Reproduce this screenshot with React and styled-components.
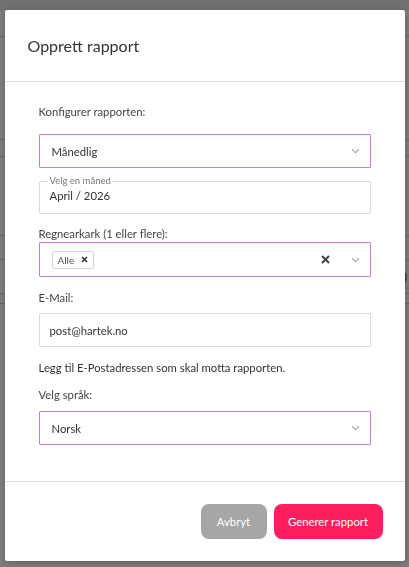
import React from 'react';
import styled, { createGlobalStyle } from 'styled-components';

const GlobalStyle = createGlobalStyle`
    html, body {
        margin: 0;
        padding: 0;
        background: #ffffff;
        font-family: 'Lato', 'Noto Sans', sans-serif;
    }
    * {
        box-sizing: border-box;
    }
`;

// Page behind the dialog
const Page = styled.div`
    width: 409px;
    height: 567px;
    overflow: hidden;
    background: #fff;
`;

const PageTop = styled.div`
    height: 10px;
    background: #e2e2e2;
`;

const PageRow = styled.div`
    height: ${props => props.h}px;
    border-bottom: 1px solid #d6d6d6;
    display: flex;
    align-items: center;
    justify-content: flex-end;
    padding-right: 2px;
    font-size: 12px;
    color: #333;
`;

const Overlay = styled.div`
    position: fixed;
    inset: 0;
    background: rgba(0, 0, 0, 0.5);
    display: flex;
    justify-content: center;
    align-items: flex-start;
    padding-top: 10px;
`;

const Modal = styled.div`
    width: 400px;
    background: #fff;
    border-radius: 2px;
    box-shadow: 0 2px 8px rgba(0, 0, 0, 0.25);
    color: #333;
`;

const ModalHeader = styled.div`
    height: 72px;
    display: flex;
    align-items: center;
    padding: 0 23px;
    border-bottom: 1px solid #dcdcdc;

    h3 {
        margin: 0;
        font-size: 16px;
        font-weight: 400;
        color: #333;
    }
`;

const ModalBody = styled.div`
    padding: 22px 34px 36px;
`;

const Label = styled.div`
    font-size: 11.3px;
    line-height: 16px;
    color: #444;
    margin-top: ${props => props.mt || 0}px;
    margin-bottom: ${props => props.mb || 0}px;
`;

const HelpText = styled.div`
    font-size: 11.3px;
    line-height: 16px;
    color: #333;
    margin-top: 13px;
`;

const SelectBox = styled.div`
    height: ${props => props.h || 34}px;
    border: 1px solid #c383c6;
    border-radius: 1px;
    display: flex;
    align-items: center;
    padding: 0 10px 0 12px;
    font-size: 11.3px;
    color: #333;
    background: #fff;
`;

const SelectValue = styled.div`
    flex: 1;
    display: flex;
    align-items: center;
`;

const Chevron = styled.svg`
    width: 9px;
    height: 6px;
    margin-left: 8px;
    flex-shrink: 0;
`;

const ClearButton = styled.svg`
    width: 9px;
    height: 9px;
    margin-right: 13px;
`;

const Chip = styled.span`
    display: inline-flex;
    align-items: center;
    gap: 7px;
    height: 18px;
    padding: 0 5px 0 5px;
    border: 1px solid #d4d4d4;
    border-radius: 2px;
    font-size: 10px;
    color: #555;
`;

const Fieldset = styled.fieldset`
    margin: 8px 0 0;
    padding: 0 10px 7px;
    height: 38px;
    border: 1px solid #dadada;
    border-radius: 2px;

    legend {
        padding: 0 2px;
        margin-left: -2px;
        font-size: 9.5px;
        line-height: 10px;
        color: #777;
    }
`;

const FieldValue = styled.div`
    font-size: 11.3px;
    line-height: 16px;
    color: #333;
    margin-top: 2px;
`;

const TextInput = styled.div`
    height: 34px;
    border: 1px solid #dadada;
    border-radius: 1px;
    display: flex;
    align-items: center;
    padding: 0 10px;
    font-size: 11.3px;
    color: #333;
`;

const ModalFooter = styled.div`
    height: 80px;
    border-top: 1px solid #dcdcdc;
    display: flex;
    align-items: center;
    justify-content: flex-end;
    gap: 7px;
    padding-right: 22px;
`;

const Button = styled.button`
    height: 35px;
    width: ${props => props.w}px;
    padding: 0;
    border: none;
    border-radius: 8px;
    background: ${props => props.primary ? '#ff1f5e' : '#a6a6a6'};
    color: #fff;
    font-family: inherit;
    font-size: 11.3px;
`;

const ChevronIcon = () => (
    <Chevron viewBox="0 0 9 6">
        <path d="M1 1.2 L4.5 4.6 L8 1.2" fill="none" stroke="#aaaaaa" strokeWidth="1.2" />
    </Chevron>
);

const App = () => {
    return (
        <>
            <GlobalStyle />
            <Page>
                <PageTop />
                <PageRow h={27} />
                <PageRow h={103} />
                <PageRow h={17} />
                <PageRow h={79} />
                <PageRow h={24} />
                <PageRow h={34}>0)</PageRow>
                <PageRow h={10} />
            </Page>
            <Overlay>
                <Modal>
                    <ModalHeader>
                        <h3>Opprett rapport</h3>
                    </ModalHeader>
                    <ModalBody>
                        <Label mb={14}>Konfigurer rapporten:</Label>
                        <SelectBox>
                            <SelectValue>Månedlig</SelectValue>
                            <ChevronIcon />
                        </SelectBox>
                        <Fieldset>
                            <legend>Velg en måned</legend>
                            <FieldValue>April / 2026</FieldValue>
                        </Fieldset>
                        <Label mt={12}>Regnearkark (1 eller flere):</Label>
                        <SelectBox h={35}>
                            <SelectValue>
                                <Chip>
                                    Alle
                                    <svg width="7" height="7" viewBox="0 0 7 7">
                                        <path d="M1 1 L6 6 M6 1 L1 6" stroke="#333" strokeWidth="1.5" />
                                    </svg>
                                </Chip>
                            </SelectValue>
                            <ClearButton viewBox="0 0 9 9">
                                <path d="M1 1 L8 8 M8 1 L1 8" stroke="#444" strokeWidth="2" />
                            </ClearButton>
                            <ChevronIcon />
                        </SelectBox>
                        <Label mt={13} mb={7}>E-Mail:</Label>
                        <TextInput>post@hartek.no</TextInput>
                        <HelpText>Legg til E-Postadressen som skal motta rapporten.</HelpText>
                        <Label mt={11} mb={8}>Velg språk:</Label>
                        <SelectBox>
                            <SelectValue>Norsk</SelectValue>
                            <ChevronIcon />
                        </SelectBox>
                    </ModalBody>
                    <ModalFooter>
                        <Button w={66}>Avbryt</Button>
                        <Button primary w={109}>Generer rapport</Button>
                    </ModalFooter>
                </Modal>
            </Overlay>
        </>
    );
};

export default App;
